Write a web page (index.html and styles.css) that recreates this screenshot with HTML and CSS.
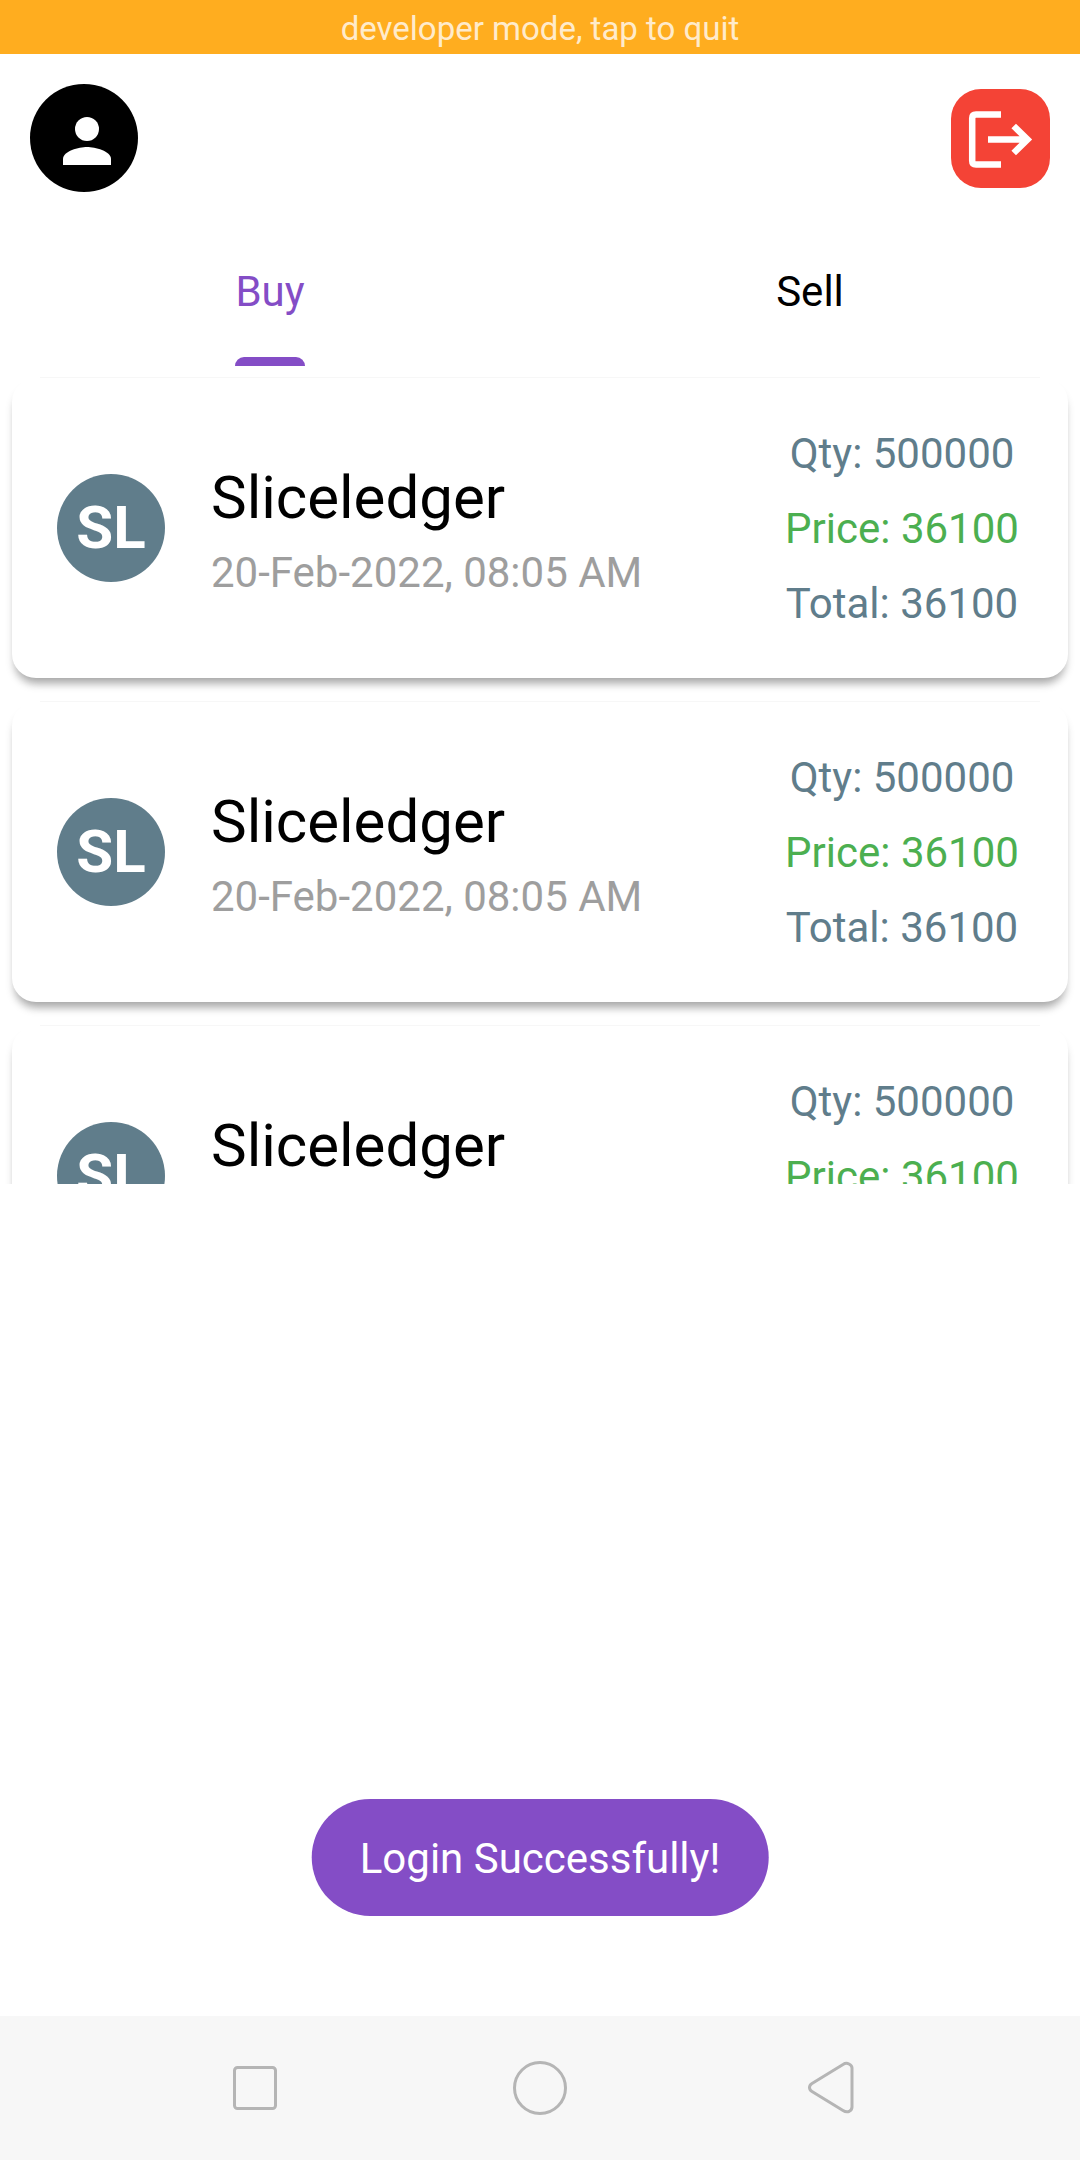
FILE: index.html
```html
<!DOCTYPE html>
<html lang="en">
<head>
  <meta charset="utf-8">
  <meta name="viewport" content="width=device-width, initial-scale=1">
  <title>Sliceledger</title>
  <link rel="stylesheet" href="styles.css">
</head>
<body>
  <div class="app">
    <button class="banner" type="button">developer mode, tap to quit</button>

    <main class="screen">
      <header class="topbar">
        <button class="profile" type="button" aria-label="Profile">
          <svg class="profile-icon" viewBox="0 0 108 108" aria-hidden="true">
            <circle cx="57" cy="45" r="12"/>
            <path d="M57 63c-8 0-24 4-24 12v6h48v-6c0-8-16-12-24-12z"/>
          </svg>
        </button>
        <button class="logout" type="button" aria-label="Log out">
          <svg class="logout-icon" viewBox="0 0 99 99" aria-hidden="true">
            <path d="M50 25.500H25q-3.800 0-3.800 3.800V71.700q0 3.800 3.800 3.800H50"/>
            <path d="M37 50.500H75M62.700 37l13.800 13.500L62.700 64"/>
          </svg>
        </button>
      </header>

      <nav class="tabs" role="tablist" aria-label="Orders">
        <button class="tab tab-active" type="button" role="tab" aria-selected="true"><span class="tab-label">Buy</span></button>
        <button class="tab" type="button" role="tab" aria-selected="false"><span class="tab-label">Sell</span></button>
      </nav>

      <ul class="orders">
        <li class="card">
          <span class="avatar">SL</span>
          <div class="info">
            <h2 class="name">Sliceledger</h2>
            <p class="date">20-Feb-2022, 08:05 AM</p>
          </div>
          <div class="figures">
            <p>Qty: 500000</p>
            <p class="price">Price: 36100</p>
            <p>Total: 36100</p>
          </div>
        </li>
        <li class="card">
          <span class="avatar">SL</span>
          <div class="info">
            <h2 class="name">Sliceledger</h2>
            <p class="date">20-Feb-2022, 08:05 AM</p>
          </div>
          <div class="figures">
            <p>Qty: 500000</p>
            <p class="price">Price: 36100</p>
            <p>Total: 36100</p>
          </div>
        </li>
        <li class="card">
          <span class="avatar">SL</span>
          <div class="info">
            <h2 class="name">Sliceledger</h2>
            <p class="date">20-Feb-2022, 08:05 AM</p>
          </div>
          <div class="figures">
            <p>Qty: 500000</p>
            <p class="price">Price: 36100</p>
            <p>Total: 36100</p>
          </div>
        </li>
      </ul>

      <p class="toast" role="status">Login Successfully!</p>
    </main>

    <nav class="sysnav" aria-label="System">
      <button class="sysnav-button" type="button" aria-label="Recent apps">
        <svg class="sysnav-icon" viewBox="0 0 60 60" aria-hidden="true"><rect x="9.500" y="9.500" width="41" height="41" rx="3"/></svg>
      </button>
      <button class="sysnav-button" type="button" aria-label="Home">
        <svg class="sysnav-icon" viewBox="0 0 60 60" aria-hidden="true"><circle cx="30" cy="30" r="25.500"/></svg>
      </button>
      <button class="sysnav-button" type="button" aria-label="Back">
        <svg class="sysnav-icon" viewBox="0 0 60 60" aria-hidden="true"><path d="M17 25.500L48 6.500Q51 4.500 54 6Q57 7.500 57 10V49Q57 52 54 53.500Q51 54.500 48 52.500L17 33.500Q14.500 32 14.500 29.500T17 25.500z"/></svg>
      </button>
    </nav>
  </div>
</body>
</html>
```
FILE: styles.css
```css
* {
  box-sizing: border-box;
}

body,
h2,
p,
ul {
  margin: 0;
  padding: 0;
}

body {
  background: #fff;
  color: #000;
  font-family: Roboto, "Liberation Sans", sans-serif;
  font-size: 42px;
  line-height: 48px;
}

button {
  border: 0;
  padding: 0;
  background: none;
  color: inherit;
  font: inherit;
  cursor: pointer;
}

.app {
  display: flex;
  flex-direction: column;
  min-height: 100vh;
}

.banner {
  padding-top: 4px;
  background: #ffad1f;
  color: #ffebcb;
  font-size: 33px;
  line-height: 50px;
}

.screen {
  position: relative;
  flex: 1;
}

.topbar {
  display: flex;
  align-items: center;
  justify-content: space-between;
  padding: 30px;
}

.profile {
  width: 108px;
  height: 108px;
  border-radius: 50%;
  background: #000;
}

.profile-icon,
.logout-icon {
  display: block;
  width: 100%;
  height: 100%;
}

.profile-icon {
  fill: #fff;
}

.logout {
  width: 99px;
  height: 99px;
  border-radius: 30px;
  background: #f44336;
}

.logout-icon {
  fill: none;
  stroke: #fff;
  stroke-width: 6.5;
}

/* Tabs */
.tabs {
  display: grid;
  grid-template-columns: 1fr 1fr;
}

.tab {
  display: flex;
  justify-content: center;
  padding-top: 46px;
}

.tab-label::after {
  content: "";
  display: block;
  height: 9px;
  margin-top: 41px;
  border-radius: 9px 9px 0 0;
}

.tab-active {
  color: #844dc6;
}

.tab-active .tab-label::after {
  background: #844dc6;
}

/* Order list */
.orders {
  display: flex;
  flex-direction: column;
  gap: 24px;
  max-height: 818px;
  padding: 12px;
  overflow-y: auto;
  scrollbar-width: none;
  list-style: none;
}

.card {
  display: flex;
  flex: none;
  align-items: center;
  gap: 46px;
  min-height: 300px;
  padding: 36px 45px;
  border-radius: 24px;
  background: #fff;
  box-shadow:
    0 9px 8px -5px rgba(0, 0, 0, 0.2),
    0 8px 10px -2px rgba(0, 0, 0, 0.2),
    0 -29px 0 -28px #f7f7f7;
}

.avatar {
  flex: none;
  width: 108px;
  border-radius: 50%;
  background: #607d8b;
  color: #fff;
  font-size: 60px;
  font-weight: 700;
  line-height: 108px;
  text-align: center;
}

.info {
  flex: 1;
}

.name {
  font-size: 60px;
  font-weight: 400;
  line-height: 90px;
}

.date {
  color: #9e9e9e;
  line-height: 60px;
}

.figures {
  min-width: 242px;
  color: #607d8b;
  line-height: 75px;
  text-align: center;
}

.price {
  color: #4caf50;
}

.toast {
  position: absolute;
  bottom: 100px;
  left: 50%;
  transform: translateX(-50%);
  padding: 36px 48px 33px;
  border-radius: 60px;
  background: #844dc6;
  color: #fff;
  white-space: nowrap;
}

/* System navigation */
.sysnav {
  display: grid;
  grid-template-columns: repeat(3, 1fr);
  padding: 42px 112px;
  background: #f7f7f7;
}

.sysnav-button {
  display: flex;
  justify-content: center;
}

.sysnav-icon {
  width: 60px;
  height: 60px;
  fill: none;
  stroke: #b5b5b5;
  stroke-width: 3;
}
```
